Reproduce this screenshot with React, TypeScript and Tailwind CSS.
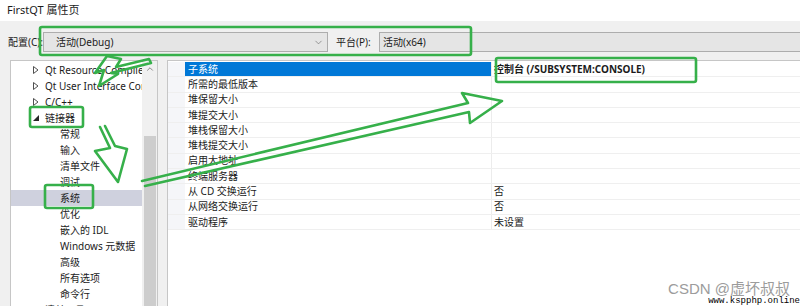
import { FC } from "react";
import { ChevronDown, ChevronUp } from "lucide-react";
import clsx from "clsx";

interface ITreeItem {
  label: string;
  level: 0 | 1;
  expander?: "open" | "closed";
  selected?: boolean;
}

const treeItems: ITreeItem[] = [
  { label: "Qt Resource Compiler", level: 0, expander: "closed" },
  { label: "Qt User Interface Compiler", level: 0, expander: "closed" },
  { label: "C/C++", level: 0, expander: "closed" },
  { label: "链接器", level: 0, expander: "open" },
  { label: "常规", level: 1 },
  { label: "输入", level: 1 },
  { label: "清单文件", level: 1 },
  { label: "调试", level: 1 },
  { label: "系统", level: 1, selected: true },
  { label: "优化", level: 1 },
  { label: "嵌入的 IDL", level: 1 },
  { label: "Windows 元数据", level: 1 },
  { label: "高级", level: 1 },
  { label: "所有选项", level: 1 },
  { label: "命令行", level: 1 },
  { label: "清单工具", level: 0, expander: "closed" },
];

const props: { name: string; value: string; bold?: boolean }[] = [
  { name: "子系统", value: "控制台 (/SUBSYSTEM:CONSOLE)", bold: true },
  { name: "所需的最低版本", value: "" },
  { name: "堆保留大小", value: "" },
  { name: "堆提交大小", value: "" },
  { name: "堆栈保留大小", value: "" },
  { name: "堆栈提交大小", value: "" },
  { name: "启用大地址", value: "" },
  { name: "终端服务器", value: "" },
  { name: "从 CD 交换运行", value: "否" },
  { name: "从网络交换运行", value: "否" },
  { name: "驱动程序", value: "未设置" },
];

const Expander: FC<{ type: "open" | "closed" }> = ({ type }) =>
  type === "closed" ? (
    <svg width="6" height="8" viewBox="0 0 6 8">
      <path d="M0.5 0.5 L5 4 L0.5 7.5 Z" fill="none" stroke="#505050" strokeWidth="1" />
    </svg>
  ) : (
    <svg width="6" height="6" viewBox="0 0 6 6">
      <path d="M6 0 L6 6 L0 6 Z" fill="#262626" />
    </svg>
  );

const Annotations: FC = () => (
  <svg
    className="absolute left-0 top-0 pointer-events-none"
    width="800"
    height="306"
    viewBox="0 0 800 306"
  >
    <g fill="none" stroke="#36b04a" strokeWidth="2.6" strokeLinejoin="round" strokeLinecap="round">
      <rect x="40" y="27" width="431" height="28" rx="2" />
      <rect x="496" y="58" width="200" height="24" rx="2" />
      <rect x="30" y="107" width="53" height="20" rx="2" />
      <rect x="45" y="185" width="48" height="23" rx="2" />
      {/* up arrow to config */}
      <path d="M107 56 L95 73 L104 70 L99 86 L118 74 L111 73 L151 63 L149 59 L116 67 L121 59 Z" />
      {/* down arrow */}
      <path d="M100 127 L110 148 L95 151 L118 182 L127 149 L115 146 L105 126" />
      {/* long arrow to value */}
      <path d="M142 181 L468 103 L462 93 L502 101 L470 123 L469 112 L145 186" />
    </g>
  </svg>
);

const App: FC = () => {
  return (
    <div className="relative w-[800px] h-[306px] overflow-hidden bg-[#f0f0f0] text-[#1b1b1b] font-['Noto_Sans','Noto_Sans_CJK_SC',sans-serif]">
      <div className="h-[21px] bg-white flex items-center pl-[7px] text-[11px]">
        FirstQT 属性页
      </div>

      <div className="h-[39px] flex items-start pt-[11px] text-[10px]">
        <span className="w-[43px] shrink-0 overflow-hidden pl-[8px] h-[20px] flex items-center whitespace-nowrap">
          配置(C):
        </span>
        <div className="w-[285px] shrink-0 h-[20px] border border-[#adadad] bg-[#e5e5e5] flex items-center justify-between pl-[12px] pr-[3px]">
          <span>活动(Debug)</span>
          <ChevronDown size={11} strokeWidth={1.3} color="#606060" />
        </div>
        <span className="w-[51px] shrink-0 overflow-hidden pl-[8px] h-[20px] flex items-center whitespace-nowrap">
          平台(P):
        </span>
        <div className="flex-1 h-[20px] border border-r-0 border-[#adadad] bg-[#e5e5e5] flex items-center pl-[3px]">
          活动(x64)
        </div>
      </div>

      <div className="flex h-[246px] pl-[10px] gap-[9px]">
        <div className="w-[148px] border border-b-0 border-[#c6c6c6] bg-white flex">
          <div className="flex-1 pt-[1px] overflow-hidden">
            {treeItems.map((item) => (
              <div
                key={item.label}
                className={clsx(
                  "h-[16px] flex items-center whitespace-nowrap text-[10px]",
                  item.selected && "bg-[#cfd1de]",
                  item.level === 0 ? "pl-[22px]" : "pl-[49px]"
                )}
              >
                {item.expander && (
                  <span className="w-[12px] shrink-0 flex items-center">
                    <Expander type={item.expander} />
                  </span>
                )}
                <span>{item.label}</span>
              </div>
            ))}
          </div>
          <div className="w-[15px] shrink-0 bg-[#f0f0f0] flex flex-col items-center">
            <div className="h-[15px] flex items-center justify-center">
              <ChevronUp size={10} strokeWidth={1.6} color="#555" />
            </div>
            <div className="h-[60px]" />
            <div className="w-[12px] flex-1 bg-[#cdcdcd]" />
          </div>
        </div>

        <div className="flex-1 border border-r-0 border-b-0 border-[#c6c6c6] bg-white pt-[1px]">
          {props.map((p, i) => (
            <div key={p.name} className="h-[15.3px] flex border-b border-[#efefef] text-[10px]">
              <div className="w-[17px] bg-[#f5f6f9]" />
              <div
                className={clsx(
                  "w-[307px] flex items-center pl-[3px] border-r border-[#ececec] whitespace-nowrap",
                  i === 0 && "bg-[#0078d7] text-white"
                )}
              >
                {p.name}
              </div>
              <div className={clsx("flex-1 flex items-center pl-[2px] whitespace-nowrap", p.bold && "font-bold")}>
                {p.value}
              </div>
            </div>
          ))}
        </div>
      </div>

      <div className="absolute right-[10px] bottom-[6px] text-[15px] text-[#9c9c9c] font-['Liberation_Sans','Noto_Sans_CJK_SC',sans-serif]">
        CSDN @虚坏叔叔
      </div>
      <div className="absolute right-0 bottom-0 text-[9px] leading-[10px] text-black font-['Liberation_Mono',monospace] bg-white/60">
        www.kspphp.online
      </div>

      <Annotations />
    </div>
  );
};

export default App;
